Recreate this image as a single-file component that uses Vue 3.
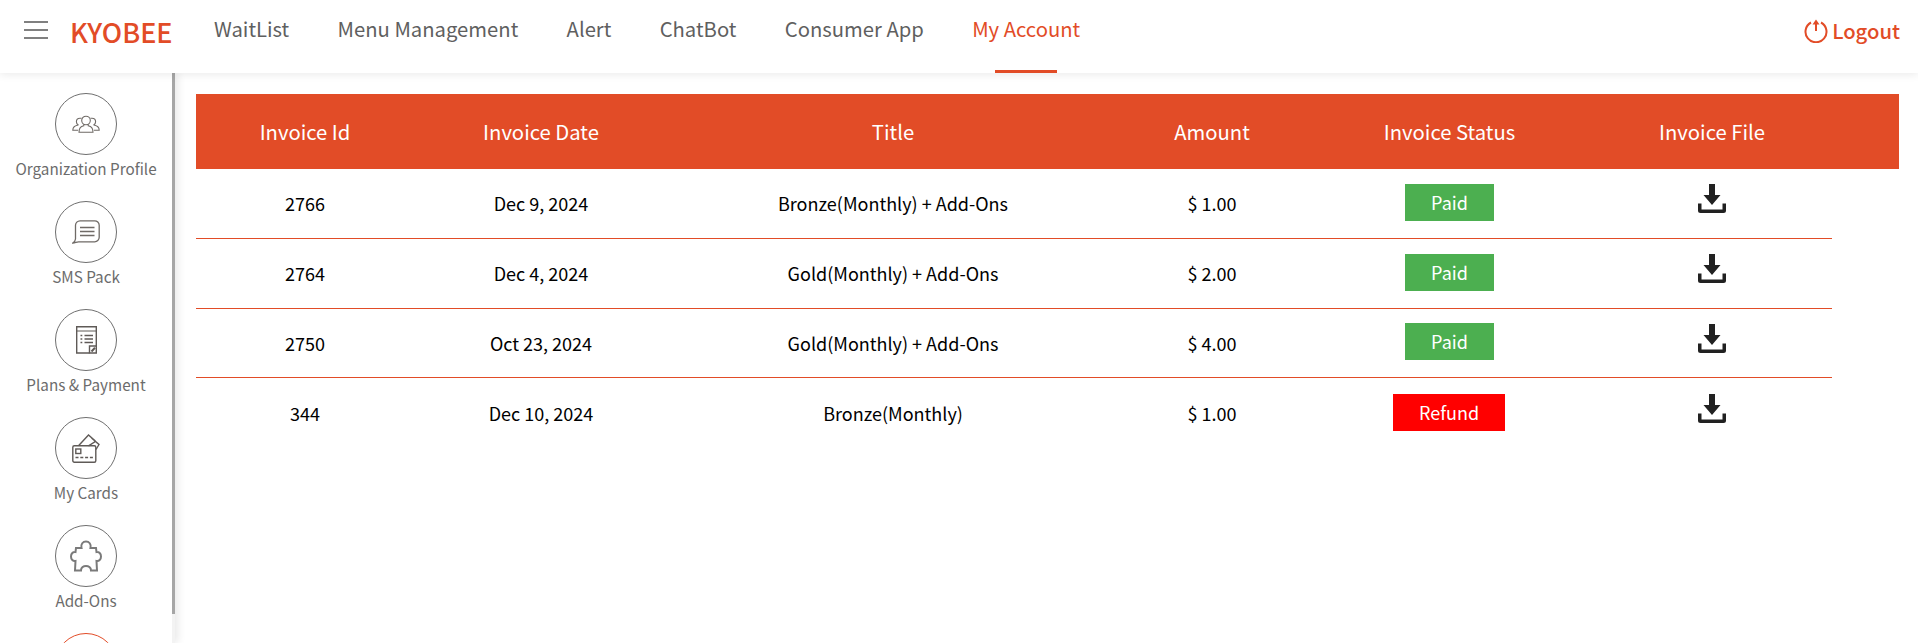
<script setup>
const navItems = [
  { label: 'WaitList', active: false },
  { label: 'Menu Management', active: false },
  { label: 'Alert', active: false },
  { label: 'ChatBot', active: false },
  { label: 'Consumer App', active: false },
  { label: 'My Account', active: true },
]
const sideItems = [
  { label: 'Organization Profile', icon: 'org' },
  { label: 'SMS Pack', icon: 'sms' },
  { label: 'Plans & Payment', icon: 'plan' },
  { label: 'My Cards', icon: 'card' },
  { label: 'Add-Ons', icon: 'addon' },
  { label: '', icon: 'inv', active: true },
]
const heads = ['Invoice Id', 'Invoice Date', 'Title', 'Amount', 'Invoice Status', 'Invoice File']
const rows = [
  { id: '2766', date: 'Dec 9, 2024', title: 'Bronze(Monthly) + Add-Ons', amount: '$ 1.00', status: 'Paid' },
  { id: '2764', date: 'Dec 4, 2024', title: 'Gold(Monthly) + Add-Ons', amount: '$ 2.00', status: 'Paid' },
  { id: '2750', date: 'Oct 23, 2024', title: 'Gold(Monthly) + Add-Ons', amount: '$ 4.00', status: 'Paid' },
  { id: '344', date: 'Dec 10, 2024', title: 'Bronze(Monthly)', amount: '$ 1.00', status: 'Refund' },
]
</script>

<template>
  <div class="page">
    <header class="topbar">
      <button class="burger" aria-label="Menu"><span></span><span></span><span></span></button>
      <div class="logo">KYOBEE</div>
      <nav class="nav">
        <a v-for="n in navItems" :key="n.label" class="nav-item" :class="{ active: n.active }">{{ n.label }}</a>
      </nav>
      <a class="logout">
        <svg width="24" height="24" viewBox="0 0 24 24" fill="none" stroke="#e24c27" stroke-width="2">
          <path d="M7 3.500A10.500 10.500 0 1 0 17 3.500" />
          <path d="M12 5v7" />
          <path d="M12 .5 8.500 5.500h7z" fill="#e24c27" stroke="none" />
        </svg>
        <span>Logout</span>
      </a>
    </header>
    <div class="body">
      <aside class="side">
        <div class="side-list">
          <div v-for="s in sideItems" :key="s.icon" class="side-item" :class="{ active: s.active }">
            <div class="circle">
              <svg v-if="s.icon === 'org'" width="28" height="18" viewBox="0 0 28 18" fill="none" stroke="#6f6a66" stroke-width="1.100">
                <circle cx="14" cy="5.500" r="4.300" />
                <path d="M11.800 9.300v1.500c-3 .8-4.800 1.800-4.800 6.500h14c0-4.700-1.800-5.700-4.800-6.500V9.300" />
                <path d="M6.500 9.800C3 11 .8 11.500.8 15.300h5.400M21.500 9.800c3.500 1.200 5.700 1.700 5.700 5.500h-5.400" />
                <path d="M9.500 3.300C8.900 3.100 8.500 3.200 8 3.200 6 3.200 4.400 4.800 4.400 6.800c0 1.300.7 2.500 1.800 3.100M18.500 3.300c.6-.2 1-.1 1.500-.1 2 0 3.600 1.600 3.600 3.600 0 1.300-.7 2.500-1.800 3.100" />
              </svg>
              <svg v-else-if="s.icon === 'sms'" width="28" height="24" viewBox="0 0 28 24" fill="none" stroke="#6f6a66" stroke-width="1.300">
                <path d="M8 .8h14.500a4.500 4.500 0 0 1 4.700 4.500v12a4.500 4.500 0 0 1-4.700 4.500H6.500C4.500 21.800 3 23 .8 23c1.700-1 2.500-2.400 2.700-4L3.500 5.300A4.500 4.500 0 0 1 8 .8z" />
                <path d="M8 7.500h14.500M8 11.500h14.500M8 15.500h14.500" stroke-width="1.500" />
              </svg>
              <svg v-else-if="s.icon === 'plan'" width="21" height="28" viewBox="0 0 21 28" fill="none" stroke="#5f5a57" stroke-width="1.400">
                <path d="M13.500 27H.7V.7h19.600V20" />
                <path d="M.7 5h19.600" stroke-width="1" />
                <path d="M4.500 9.500h1.800M8.500 9.500h8.500M4.500 13h1.800M8.500 13h8.500M4.500 16.500h1.800M8.500 16.500h8.500" stroke-width="1.500" />
                <path d="M13.500 27v-7h6.800v7z" />
                <path d="M15.500 25.500l3.500-3.800" stroke-width="2" />
              </svg>
              <svg v-else-if="s.icon === 'card'" width="28" height="29" viewBox="0 0 28 29" fill="none" stroke="#5f5a57" stroke-width="1.400">
                <rect x=".8" y="11.800" width="23" height="16.400" rx="1.500" />
                <path d="M6.500 11.800 16.500 1l6.500 5.800-.5 1.200-6 3.800M19.500 4 27 10.500l-3 5M22.500 6.700l4.500 3.800" />
                <rect x="3.800" y="15" width="5" height="4.500" />
                <path d="M3.500 23.500h18" stroke-dasharray="3 1.800" />
              </svg>
              <svg v-else-if="s.icon === 'addon'" width="32" height="32" viewBox="0 0 32 32" fill="none" stroke="#7a7a7a" stroke-width="2">
                <path d="M6 8H11.500C10.500 4 13 1.500 16 1.500S21.500 4 20.500 8H26L26.500 12C29 11.500 31 13.500 31 16.500S29 21.500 26.500 21L27 30.500H21C21 27.500 18.500 26 16 26S11 27.500 11 30.500H5L5.500 21C3 21.500 1 19.500 1 16.500S3 11.500 5.500 12Z" />
              </svg>
            </div>
            <div v-if="s.label" class="side-label">{{ s.label }}</div>
          </div>
        </div>
        <div class="scroll-track"><div class="scroll-thumb"></div></div>
      </aside>
      <main class="main">
        <div class="thead">
          <div v-for="h in heads" :key="h" class="th">{{ h }}</div>
        </div>
        <div v-for="r in rows" :key="r.id + r.date" class="tr">
          <div class="td">{{ r.id }}</div>
          <div class="td">{{ r.date }}</div>
          <div class="td">{{ r.title }}</div>
          <div class="td">{{ r.amount }}</div>
          <div class="td">
            <span class="status" :class="r.status === 'Paid' ? 'paid' : 'refund'">{{ r.status }}</span>
          </div>
          <div class="td file">
            <svg width="28" height="29" viewBox="0 0 28 29" fill="#212121">
              <path d="M11 0h6v11h5.500L14 21 5.500 11H11z" />
              <path d="M0 19.500h3.500v6h21v-6H28V26.500a2.500 2.500 0 0 1-2.500 2.500h-23A2.500 2.500 0 0 1 0 26.500z" />
            </svg>
          </div>
        </div>
      </main>
    </div>
  </div>
</template>

<style>
html, body { margin: 0; background: #fff; overflow: hidden; }
</style>

<style scoped>
.page {
  width: 1918px;
  height: 643px;
  overflow: hidden;
  display: flex;
  flex-direction: column;
  font-family: "Noto Sans CJK SC", "Noto Sans", sans-serif;
  background: #fff;
}
.topbar {
  height: 73px;
  flex: none;
  display: flex;
  align-items: flex-start;
  position: relative;
  z-index: 2;
  background: #fff;
  box-shadow: 0 2px 8px rgba(0, 0, 0, 0.08);
}
.burger {
  width: 24px;
  height: 18px;
  margin: 21px 0 0 24px;
  padding: 0;
  border: 0;
  background: none;
  display: flex;
  flex-direction: column;
  justify-content: space-between;
}
.burger span {
  display: block;
  height: 2px;
  background: #808080;
}
.logo {
  margin: 14px 0 0 22px;
  width: 144px;
  font-size: 27px;
  line-height: 36px;
  font-weight: 500;
  color: #e24c27;
}
.nav {
  display: flex;
  height: 73px;
}
.nav-item {
  position: relative;
  margin-right: 48.300px;
  font-size: 20.250px;
  line-height: 30px;
  padding-top: 14px;
  color: #5f5f5f;
  white-space: nowrap;
}
.nav-item.active { color: #e24c27; }
.nav-item.active::after {
  content: "";
  position: absolute;
  left: 23px;
  right: 23px;
  bottom: 0;
  height: 3px;
  background: #e24c27;
}
.logout {
  margin-left: auto;
  margin-right: 18px;
  margin-top: 18px;
  display: flex;
  align-items: center;
  gap: 4px;
  color: #e24c27;
  font-size: 20.250px;
  line-height: 26px;
  font-weight: 500;
}
.body {
  flex: 1;
  display: flex;
  min-height: 0;
}
.side {
  width: 175px;
  flex: none;
  display: flex;
  overflow: hidden;
  box-shadow: 3px 0 8px rgba(0, 0, 0, 0.09);
  position: relative;
}
.side-list {
  width: 172px;
  flex: none;
  padding-top: 20px;
  display: flex;
  flex-direction: column;
  align-items: center;
}
.side-item {
  height: 108px;
  flex: none;
  width: 100%;
  display: flex;
  flex-direction: column;
  align-items: center;
}
.circle {
  width: 60px;
  height: 60px;
  flex: none;
  border: 1px solid #6f6f6f;
  border-radius: 50%;
  display: flex;
  align-items: center;
  justify-content: center;
}
.side-item.active .circle { border-color: #e24c27; }
.side-label {
  margin-top: 2px;
  font-size: 15.250px;
  line-height: 22px;
  color: #6c6c6c;
  white-space: nowrap;
}
.scroll-track {
  width: 3px;
  flex: none;
  background: #f3f3f3;
}
.scroll-thumb {
  width: 3px;
  height: 541px;
  background: #a6a6a6;
}
.main {
  flex: 1;
  padding: 21px 19px 0 21px;
  min-width: 0;
}
.thead, .tr {
  display: grid;
  grid-template-columns: 218px 254px 450px 188px 287px 238px;
}
.thead {
  height: 75px;
  background: #e24c27;
  align-items: center;
}
.th {
  text-align: center;
  color: #fff;
  font-size: 20.250px;
  line-height: 26px;
}
.tr {
  width: 1636px;
  height: 69.750px;
  box-sizing: border-box;
  border-bottom: 1px solid #e24c27;
  align-items: center;
}
.tr:last-child { border-bottom: 0; }
.td {
  text-align: center;
  color: #000;
  font-size: 18px;
  line-height: 24px;
}
.file {
  display: flex;
  justify-content: center;
  height: 29px;
  margin-top: -9px;
}
.status {
  display: inline-block;
  color: #fff;
  font-size: 18px;
  line-height: 37px;
  height: 37px;
  margin-bottom: 2px;
  vertical-align: middle;
}
.paid { width: 89px; background: #4caf50; }
.refund { width: 112px; margin-right: 1px; background: #ff0000; }
</style>
